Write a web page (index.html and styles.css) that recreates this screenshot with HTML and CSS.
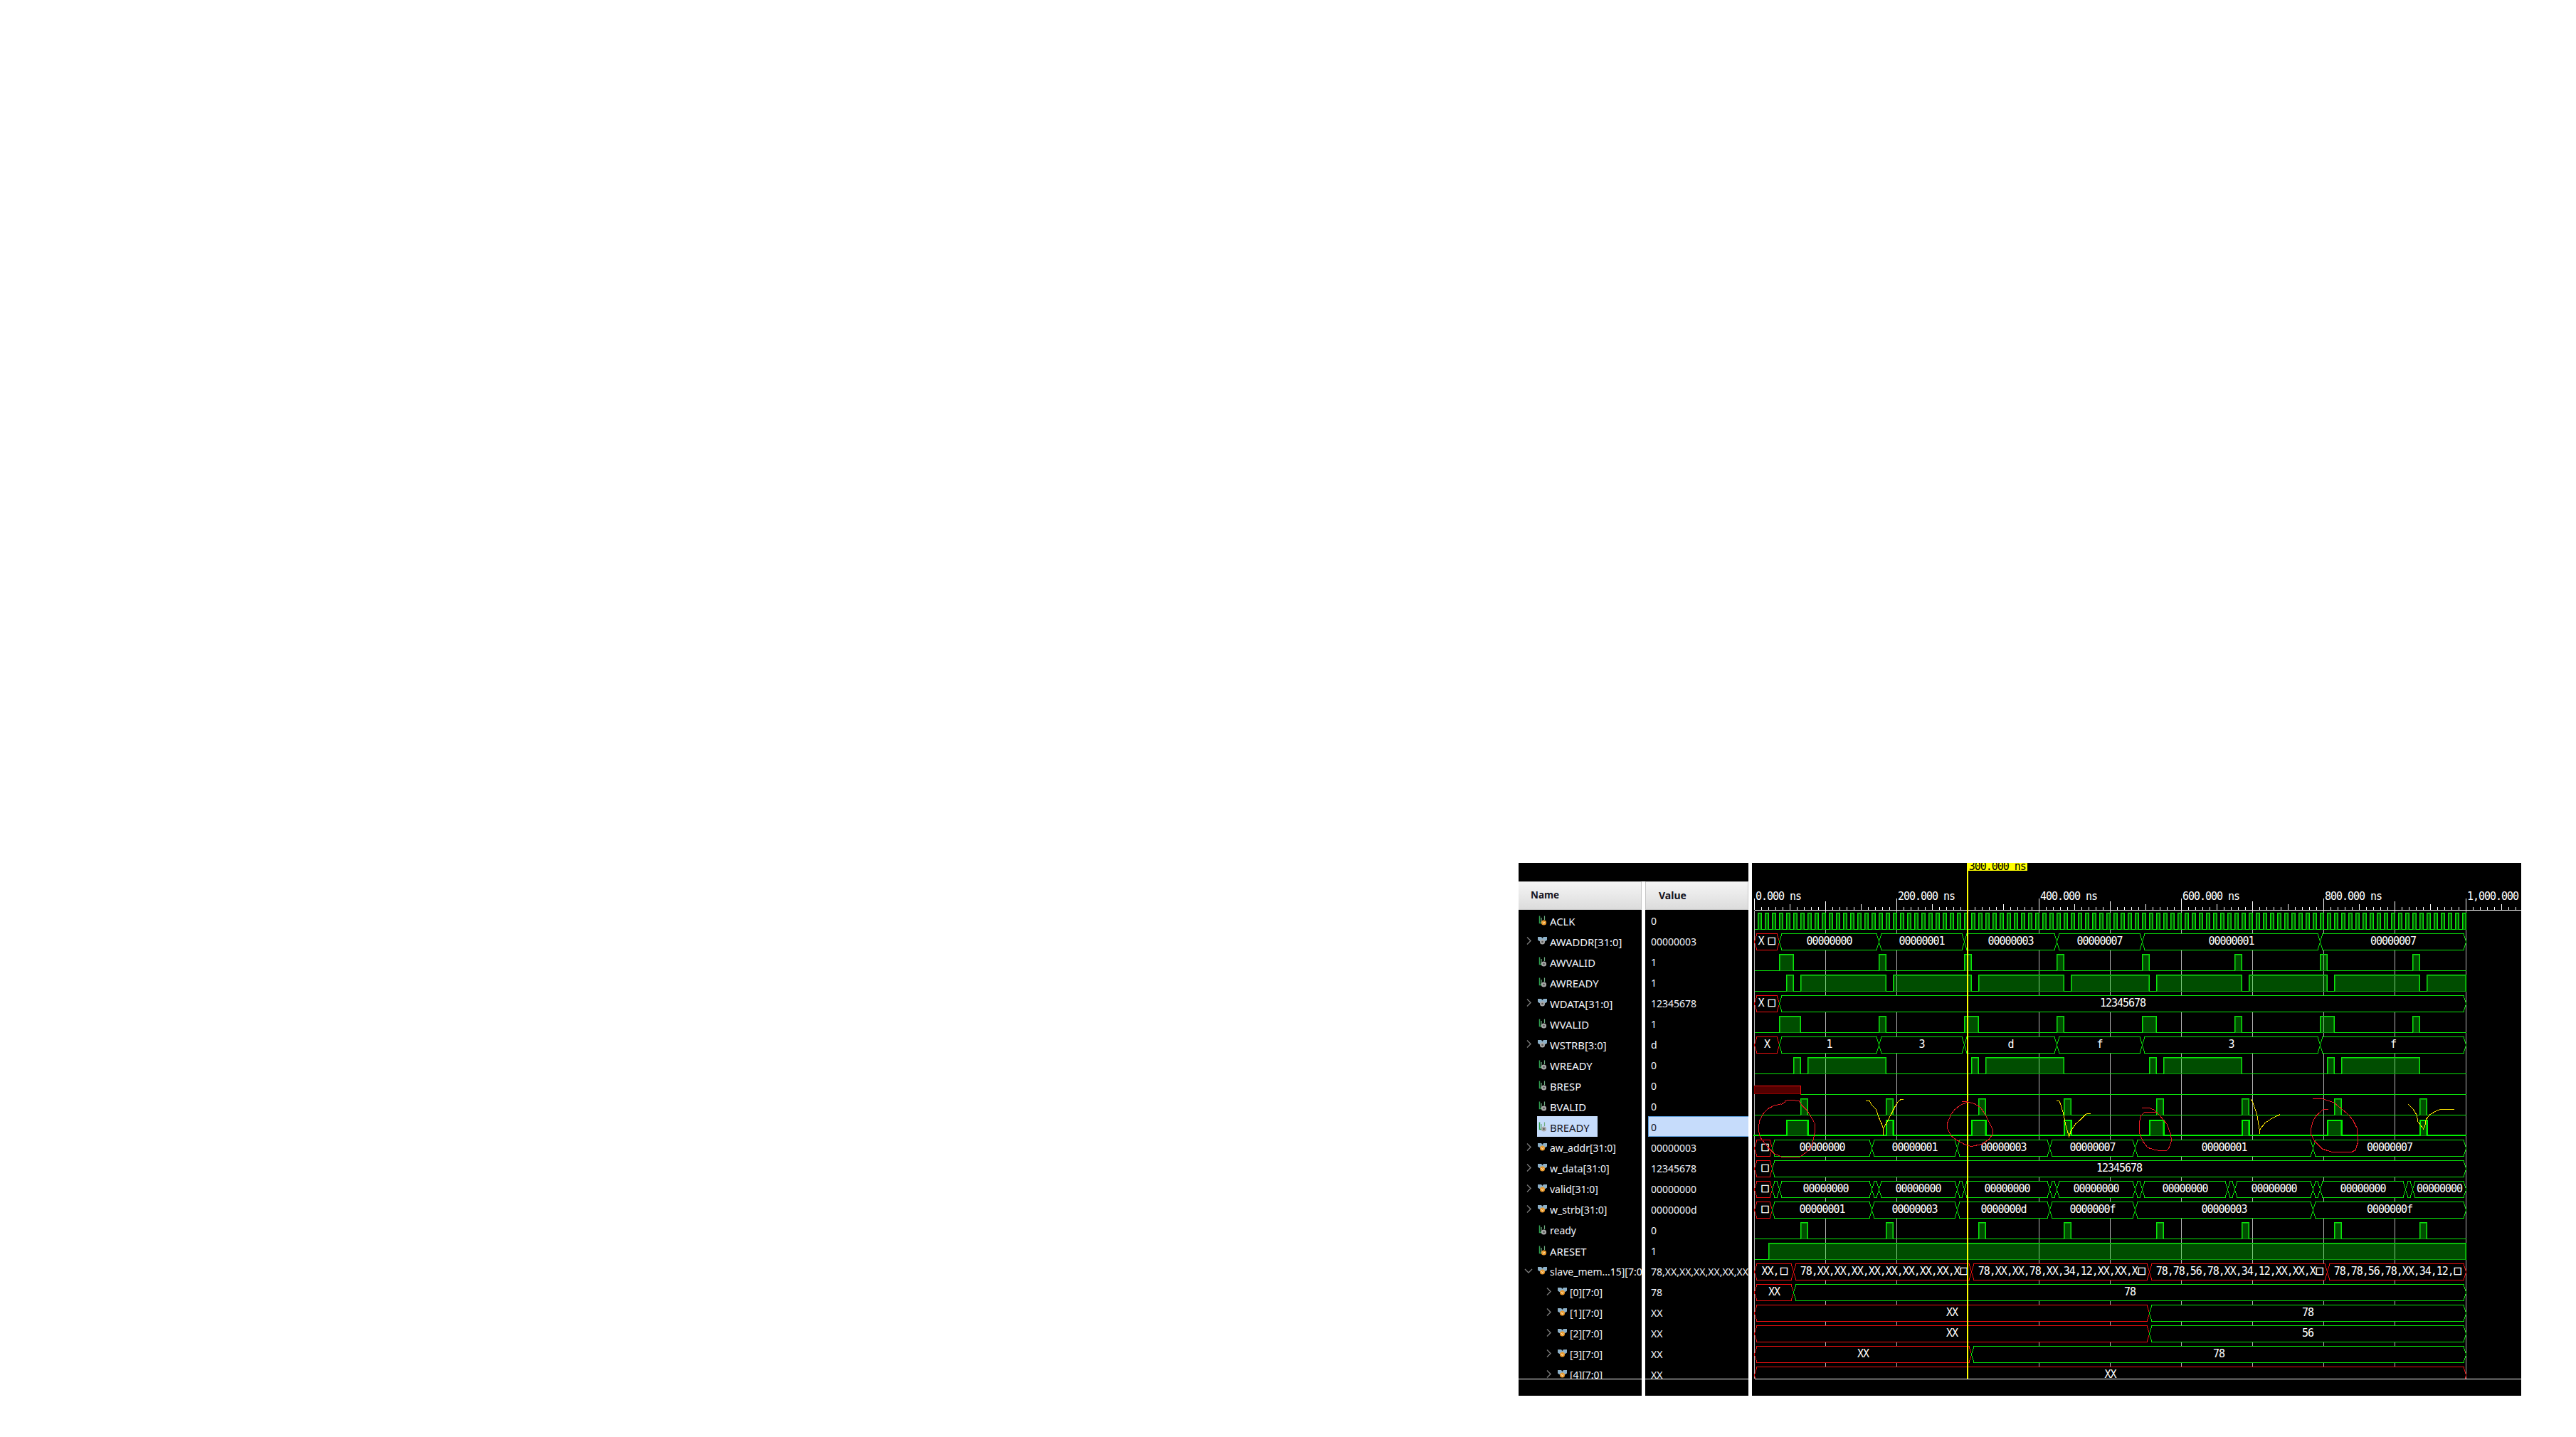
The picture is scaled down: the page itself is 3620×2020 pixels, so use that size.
FILE: index.html
```html
<!DOCTYPE html>
<html lang="en">
<head>
  <meta charset="UTF-8" />
  <title>Waveform Viewer</title>
  <link rel="stylesheet" href="styles.css">
</head>
<body>

  <!-- object tree icons, reused in the name column -->
  <svg class="defs" aria-hidden="true">
    <symbol id="chev-right" viewBox="0 0 9 13"><path class="chev" d="M2 1.5 7 6.5 2 11.5" /></symbol>
    <symbol id="chev-down" viewBox="0 0 12 13"><path class="chev" d="M1 4 6 9 11 4" /></symbol>
    <symbol id="bit-gray" viewBox="0 0 13 14">
      <path class="bit-l" d="M2.5 0.5V10.5H5" />
      <path class="bit-r" d="M5 10.5V3M9.5 0.5V6" />
      <circle class="medal-gray" cx="8.5" cy="10" r="3.6" />
      <circle class="medal-hole" cx="8.5" cy="10" r="1.3" />
    </symbol>
    <symbol id="bit-orange" viewBox="0 0 13 14">
      <path class="bit-l" d="M2.5 0.5V10.5H5" />
      <path class="bit-r" d="M5 10.5V3M9.5 0.5V6" />
      <circle class="medal-orange" cx="8.5" cy="10" r="3.6" />
      <path class="medal-v" d="M7.2 8.9 8.5 11.4 9.8 8.9" />
    </symbol>
    <symbol id="bus-gray" viewBox="0 0 13 14">
      <path class="wing" d="M0 1H5L6.5 3 8 1H13V5.5L9 8H4L0 5.5Z" />
      <circle class="medal-gray" cx="6.5" cy="8" r="3.5" />
      <circle class="medal-hole" cx="6.5" cy="8" r="1.3" />
    </symbol>
    <symbol id="bus-orange" viewBox="0 0 13 14">
      <path class="wing" d="M0 1H5L6.5 3 8 1H13V5.5L9 8H4L0 5.5Z" />
      <circle class="medal-orange" cx="6.5" cy="8" r="3.5" />
      <path class="medal-v" d="M5.2 6.9 6.5 9.4 7.8 6.9" />
    </symbol>
  </svg>

  <div class="viewer">

    <div class="col col-names">
      <div class="col-top"></div>
      <div class="col-head col-head-name">Name</div>
      <div class="rows">
        <div class="row"><span class="tw"></span><span class="cell caps"><svg class="ico"><use href="#bit-orange" /></svg>ACLK</span></div>
        <div class="row"><svg class="tw"><use href="#chev-right" /></svg><span class="cell caps"><svg class="ico"><use href="#bus-gray" /></svg>AWADDR[31:0]</span></div>
        <div class="row"><span class="tw"></span><span class="cell caps"><svg class="ico"><use href="#bit-gray" /></svg>AWVALID</span></div>
        <div class="row"><span class="tw"></span><span class="cell caps"><svg class="ico"><use href="#bit-gray" /></svg>AWREADY</span></div>
        <div class="row"><svg class="tw"><use href="#chev-right" /></svg><span class="cell caps"><svg class="ico"><use href="#bus-gray" /></svg>WDATA[31:0]</span></div>
        <div class="row"><span class="tw"></span><span class="cell caps"><svg class="ico"><use href="#bit-gray" /></svg>WVALID</span></div>
        <div class="row"><svg class="tw"><use href="#chev-right" /></svg><span class="cell caps"><svg class="ico"><use href="#bus-gray" /></svg>WSTRB[3:0]</span></div>
        <div class="row"><span class="tw"></span><span class="cell caps"><svg class="ico"><use href="#bit-gray" /></svg>WREADY</span></div>
        <div class="row"><span class="tw"></span><span class="cell caps"><svg class="ico"><use href="#bit-gray" /></svg>BRESP</span></div>
        <div class="row"><span class="tw"></span><span class="cell caps"><svg class="ico"><use href="#bit-gray" /></svg>BVALID</span></div>
        <div class="row"><span class="tw"></span><span class="cell caps selected"><svg class="ico"><use href="#bit-gray" /></svg>BREADY</span></div>
        <div class="row"><svg class="tw"><use href="#chev-right" /></svg><span class="cell"><svg class="ico"><use href="#bus-orange" /></svg>aw_addr[31:0]</span></div>
        <div class="row"><svg class="tw"><use href="#chev-right" /></svg><span class="cell"><svg class="ico"><use href="#bus-orange" /></svg>w_data[31:0]</span></div>
        <div class="row"><svg class="tw"><use href="#chev-right" /></svg><span class="cell"><svg class="ico"><use href="#bus-orange" /></svg>valid[31:0]</span></div>
        <div class="row"><svg class="tw"><use href="#chev-right" /></svg><span class="cell"><svg class="ico"><use href="#bus-orange" /></svg>w_strb[31:0]</span></div>
        <div class="row"><span class="tw"></span><span class="cell"><svg class="ico"><use href="#bit-gray" /></svg>ready</span></div>
        <div class="row"><span class="tw"></span><span class="cell caps"><svg class="ico"><use href="#bit-orange" /></svg>ARESET</span></div>
        <div class="row"><svg class="tw tw-open"><use href="#chev-down" /></svg><span class="cell"><svg class="ico"><use href="#bus-orange" /></svg>slave_mem...15][7:0]</span></div>
        <div class="row child"><svg class="tw"><use href="#chev-right" /></svg><span class="cell"><svg class="ico"><use href="#bus-orange" /></svg>[0][7:0]</span></div>
        <div class="row child"><svg class="tw"><use href="#chev-right" /></svg><span class="cell"><svg class="ico"><use href="#bus-orange" /></svg>[1][7:0]</span></div>
        <div class="row child"><svg class="tw"><use href="#chev-right" /></svg><span class="cell"><svg class="ico"><use href="#bus-orange" /></svg>[2][7:0]</span></div>
        <div class="row child"><svg class="tw"><use href="#chev-right" /></svg><span class="cell"><svg class="ico"><use href="#bus-orange" /></svg>[3][7:0]</span></div>
        <div class="row child"><svg class="tw"><use href="#chev-right" /></svg><span class="cell"><svg class="ico"><use href="#bus-orange" /></svg>[4][7:0]</span></div>
      </div>
      <div class="col-bot"></div>
    </div>

    <div class="col col-values">
      <div class="col-top"></div>
      <div class="col-head col-head-value">Value</div>
      <div class="rows">
        <div class="val">0</div>
        <div class="val">00000003</div>
        <div class="val">1</div>
        <div class="val">1</div>
        <div class="val">12345678</div>
        <div class="val">1</div>
        <div class="val">d</div>
        <div class="val">0</div>
        <div class="val">0</div>
        <div class="val">0</div>
        <div class="val val-selected">0</div>
        <div class="val">00000003</div>
        <div class="val">12345678</div>
        <div class="val">00000000</div>
        <div class="val">0000000d</div>
        <div class="val">0</div>
        <div class="val">1</div>
        <div class="val">78,XX,XX,XX,XX,XX,XX,XX,XX,XX,XX,XX,XX,XX,XX,XX</div>
        <div class="val">78</div>
        <div class="val">XX</div>
        <div class="val">XX</div>
        <div class="val">XX</div>
        <div class="val">XX</div>
      </div>
      <div class="col-bot"></div>
    </div>

    <div class="wave-panel">
      <svg id="wave" class="wave" viewBox="0 0 1081 749"></svg>
    </div>

  </div>

  <script src="wave.js"></script>
</body>
</html>
```

FILE: styles.css
```css
body {
  margin: 0;
  padding: 1213px 0 0 2134px;
  box-sizing: border-box;
  height: 100vh;
  overflow: hidden;
  background: #fff;
  font-family: "Noto Sans", "Open Sans", sans-serif;
  font-size: 14px;
}

.defs {
  display: none;
}

.viewer {
  display: flex;
  gap: 5px;
  width: 1409px;
  height: 749px;
}

.col {
  display: flex;
  flex-direction: column;
  flex: none;
  background: #000;
  color: #f2f6fd;
}

.col-names {
  width: 173px;
}

.col-values {
  width: 145px;
}

.col-top {
  height: 26px;
  flex: none;
  background: #000;
}

/* the black band above the headers runs over the column gap */
.col-names .col-top {
  margin-right: -5px;
}

.col-head {
  height: 40px;
  flex: none;
  box-sizing: border-box;
  display: flex;
  align-items: center;
  padding-bottom: 2px;
  border-top: 1px solid #cfcfcf;
  border-bottom: 1px solid #c6c6c6;
  border-right: 1px solid #c6c6c6;
  background: linear-gradient(#f5f5f5, #dcdcdc);
  color: #14141e;
  font-weight: 700;
}

.col-head-name {
  padding-left: 17px;
  font-size: 13.4px;
}

.col-head-value {
  padding-left: 18px;
  border-left: 1px solid #c6c6c6;
}

.rows {
  height: 659px;
  flex: none;
  overflow: hidden;
  border-bottom: 1px solid #fff;
}

.col-bot {
  height: 23px;
  flex: none;
}

.row {
  display: flex;
  align-items: center;
  height: 29px;
  padding-left: 10px;
  white-space: nowrap;
}

.row.child {
  padding-left: 38px;
}

.tw {
  flex: none;
  width: 9px;
  height: 13px;
  margin-right: 7px;
}

.tw-open {
  width: 12px;
  margin-left: -2px;
  margin-right: 6px;
}

.cell {
  display: flex;
  align-items: center;
  box-sizing: border-box;
  height: 100%;
  padding: 2px 11px 0 0;
}

/* the tool's UI font runs wider on capitals than the one we have */
.cell.caps {
  font-size: 14.8px;
}

.cell.selected {
  background: #c6dcfb;
  color: #14141e;
}

.ico {
  flex: none;
  width: 13px;
  height: 14px;
  margin: 0 4px 2px 1px;
}

.chev {
  fill: none;
  stroke: #7c7c7c;
  stroke-width: 1.4;
}

.bit-l {
  fill: none;
  stroke: #2ea04f;
  stroke-width: 1.5;
}

.bit-r {
  fill: none;
  stroke: #6fae82;
  stroke-width: 1.2;
}

.wing {
  fill: #8cb0c8;
}

.medal-gray {
  fill: #a8a8a8;
}

.medal-hole {
  fill: #555;
}

.medal-orange {
  fill: #ea9a2e;
}

.medal-v {
  fill: none;
  stroke: #fff3d6;
  stroke-width: 0.8;
}

.val {
  display: flex;
  align-items: center;
  box-sizing: border-box;
  height: 29px;
  padding: 2px 0 0 8px;
  white-space: nowrap;
}

.val-selected {
  margin-left: 4px;
  padding-left: 3px;
  background: #c6dcfb;
  border: 1px solid #5b9ad6;
  border-right: none;
  color: #14141e;
}

.wave-panel {
  flex: none;
  width: 1081px;
  height: 749px;
  background: #000;
}

.wave {
  display: block;
  width: 1081px;
  height: 749px;
  overflow: hidden;
  shape-rendering: crispEdges;
  font-family: "DejaVu Sans Mono", "Liberation Mono", monospace;
  font-size: 15px;
  letter-spacing: -1.03px;
}

.axis {
  stroke: #fff;
  stroke-width: 1;
  fill: none;
}

.grid {
  stroke: #b4b4b4;
  stroke-width: 1;
}

.time {
  fill: #fff;
}

.nf {
  font-family: "Noto Sans CJK SC", sans-serif;
  font-size: 12px;
  font-weight: 700;
  letter-spacing: 0;
  stroke: #fff;
  stroke-width: 0.6;
}

.bus {
  fill: #000;
  stroke-width: 1;
}

.bus.ok {
  stroke: #0ae60a;
}

.bus.bad {
  stroke: #f00f0f;
}

.label {
  fill: #fff;
  text-anchor: middle;
}

.label.left {
  text-anchor: start;
}

.fill-ok {
  fill: #00ff00;
  fill-opacity: 0.3;
  stroke: #0a9a0a;
  stroke-width: 1;
}

.trace {
  fill: none;
  stroke: #0ae60a;
  stroke-width: 1;
}

.trace.bold {
  stroke: #00f000;
  stroke-width: 2;
}

.fill-bad {
  fill: #ff0000;
  fill-opacity: 0.33;
  stroke: #8a0000;
  stroke-width: 1;
}

.trace-bad {
  fill: none;
  stroke: #f00f0f;
  stroke-width: 1;
}

.cursor {
  fill: #ffff00;
}

.cursor-text {
  fill: #000;
}

.ink {
  fill: none;
  stroke-width: 1;
  stroke-linejoin: round;
}

.ink-red {
  stroke: #ee1c25;
}

.ink-yellow {
  stroke: #ffe600;
}
```

FILE: wave.js
```js
// 1 ns = 1 px, row pitch 29 px
const X0 = 3.5;
const END = 1000;
const BEVEL = 3.5;
const BOTTOM = 725;
const BOX = '\u25a1';

const x = t => X0 + t;
const rowTop = k => 70.5 + 29 * k;
const rowBase = k => 93.5 + 29 * k;

// bit signals: row, [[rise, fall], ...]
const bits = [
  { row: 2, high: [[35, 55], [175, 185], [295, 305], [425, 435], [545, 555], [675, 685], [795, 805], [925, 935]] },
  { row: 3, high: [[45, 55], [65, 185], [195, 305], [315, 435], [445, 555], [565, 685], [695, 805], [815, 935], [945, 1000]] },
  { row: 5, high: [[35, 65], [175, 185], [295, 315], [425, 435], [545, 565], [675, 685], [795, 815], [925, 935]] },
  { row: 7, high: [[55, 65], [75, 185], [305, 315], [325, 435], [555, 565], [575, 685], [805, 815], [825, 935]] },
  { row: 9, high: [[65, 75], [185, 195], [315, 325], [435, 445], [565, 575], [685, 695], [815, 825], [935, 945]] },
  { row: 10, bold: true, high: [[45, 75], [185, 195], [305, 325], [435, 445], [555, 575], [685, 695], [805, 825], [935, 945]] },
  { row: 15, high: [[65, 75], [185, 195], [315, 325], [435, 445], [565, 575], [685, 695], [815, 825], [935, 945]] },
  { row: 16, high: [[20, 1000]] }
];

// clock: 100 MHz, high for the second half of each period
const clock = { row: 0, high: [] };
for (let t = 5; t < END; t += 10) clock.high.push([t, t + 5]);
bits.unshift(clock);

// bus signals: row, edges, labels, which segments are unknown (red)
// first: where the first label starts and the space before its box glyph
const A = '00000000';
const buses = [
  { row: 1, first: { at: 5, gap: 5.2 }, edges: [0, 35, 175, 295, 425, 545, 795, 1000], labels: ['X' + BOX, A, '00000001', '00000003', '00000007', '00000001', '00000007'], bad: [0] },
  { row: 4, first: { at: 5, gap: 5.2 }, edges: [0, 35, 1000], labels: ['X' + BOX, '12345678'], bad: [0] },
  { row: 6, edges: [0, 35, 175, 295, 425, 545, 795, 1000], labels: ['X', '1', '3', 'd', 'f', '3', 'f'], bad: [0] },
  { row: 11, first: { at: 9, gap: 0 }, edges: [0, 25, 165, 285, 415, 535, 785, 1000], labels: [BOX, A, '00000001', '00000003', '00000007', '00000001', '00000007'], bad: [0] },
  { row: 12, first: { at: 9, gap: 0 }, edges: [0, 25, 1000], labels: [BOX, '12345678'], bad: [0] },
  { row: 13, first: { at: 9, gap: 0 }, edges: [0, 25, 35, 165, 175, 285, 295, 415, 425, 535, 545, 665, 675, 785, 795, 915, 925, 1000], labels: [BOX, '', A, '', A, '', A, '', A, '', A, '', A, '', A, '', A], bad: [0] },
  { row: 14, first: { at: 9, gap: 0 }, edges: [0, 25, 165, 285, 415, 535, 785, 1000], labels: [BOX, '00000001', '00000003', '0000000d', '0000000f', '00000003', '0000000f'], bad: [0] },
  { row: 17, first: { at: 10, gap: 1.5 }, edges: [0, 55, 305, 555, 805, 1000], left: true, labels: ['XX,' + BOX, '78,XX,XX,XX,XX,XX,XX,XX,XX,X' + BOX, '78,XX,XX,78,XX,34,12,XX,XX,X' + BOX, '78,78,56,78,XX,34,12,XX,XX,X' + BOX, '78,78,56,78,XX,34,12,' + BOX], bad: [0, 1, 2, 3, 4] },
  { row: 18, edges: [0, 55, 1000], labels: ['XX', '78'], bad: [0] },
  { row: 19, edges: [0, 555, 1000], labels: ['XX', '78'], bad: [0] },
  { row: 20, edges: [0, 555, 1000], labels: ['XX', '56'], bad: [0] },
  { row: 21, edges: [0, 305, 1000], labels: ['XX', '78'], bad: [0] },
  { row: 22, edges: [0, 1000], labels: ['XX'], bad: [0] }
];

// pen marks, traced off the 3x crops: ox is the crop's left edge in panel px
const marks = [
  { cls: 'ink-red', ox: -12, pts: [158,188, 175,178, 175,172, 205,169, 235,173, 245,190, 270,215, 285,240, 300,265, 302,300, 290,360, 270,385, 240,408, 160,408, 130,395, 100,365, 70,325, 63,290, 68,255, 85,225, 105,205, 130,192, 160,185] },
  { cls: 'ink-yellow', ox: -12, pts: [517,172, 533,174, 540,188, 560,210, 572,245, 585,275, 590,290, 590,318, 590,290, 605,262, 625,225, 640,195, 652,175, 663,167, 674,166] },
  { cls: 'ink-red', ox: -12, pts: [922,176, 945,176, 975,185, 1000,200, 1020,232, 1035,260, 1050,290, 1050,315, 1035,335, 1005,355, 960,365, 930,355, 895,335, 875,320, 860,290, 860,265, 875,230, 890,210, 915,190, 945,178] },
  { cls: 'ink-yellow', ox: 388, pts: [121,172, 132,173, 140,195, 150,230, 160,280, 173,325, 180,300, 200,270, 225,248, 245,228, 263,226] },
  { cls: 'ink-red', ox: 388, pts: [480,202, 510,202, 530,210, 540,220, 560,240, 585,270, 600,310, 605,340, 595,370, 585,382, 550,382, 530,378, 505,370, 485,345, 470,310, 468,270, 475,235, 490,222, 545,220] },
  { cls: 'ink-yellow', ox: 388, pts: [940,165, 950,185, 965,230, 975,290, 976,312, 976,295, 1000,265, 1030,245, 1063,230] },
  { cls: 'ink-red', ox: 738, pts: [150,163, 190,163, 210,170, 240,180, 270,205, 300,230, 320,255, 338,290, 340,350, 330,380, 315,388, 230,388, 190,375, 160,345, 143,315, 143,290, 150,260, 165,235, 195,208, 215,208] },
  { cls: 'ink-yellow', ox: 738, pts: [553,187, 575,210, 590,235, 592,258, 605,275, 617,292, 625,270, 628,250, 645,230, 670,215, 690,208, 747,208] }
];

function withBox(text, gap) {
  return text.replace(BOX, `<tspan class="nf" dx="${gap}">${BOX}</tspan>`);
}

function drawAxis() {
  let s = `<path class="axis" d="M${X0} 66.5H1081" />`;
  for (let t = 0; t <= 1070; t += 10) {
    const h = t % 200 === 0 ? 16 : t % 100 === 0 ? 12 : t % 50 === 0 ? 8 : 4;
    s += `<path class="axis" d="M${x(t)} 66V${66 - h}" />`;
  }
  for (let t = 0; t <= END; t += 200) {
    const label = t === 1000 ? '1,000.000 ns' : `${t}.000 ns`;
    s += `<text class="time" x="${x(t) + 1.5}" y="52">${label}</text>`;
  }
  return s;
}

function drawGrid() {
  let s = '';
  for (let t = 0; t <= END; t += 100) {
    s += `<path class="grid" d="M${x(t)} 67V${BOTTOM}" />`;
  }
  return s;
}

function drawBit(sig) {
  const top = sig.bold ? rowTop(sig.row) + 1 : rowTop(sig.row);
  const base = sig.bold ? rowBase(sig.row) - 1 : rowBase(sig.row);
  let fills = '';
  let d = `M${sig.bold ? x(-2) : x(0)} ${base}`;
  for (const [rise, fall] of sig.high) {
    fills += `<rect class="fill-ok" x="${x(rise) + 1}" y="${top + 1}" width="${fall - rise - 2}" height="${rowBase(sig.row) - top - 1}" />`;
    d += `H${x(rise)}V${top}H${x(fall)}`;
    d += fall === END ? '' : `V${base}`;
  }
  if (sig.high[sig.high.length - 1][1] !== END) d += `H${x(END)}`;
  else d += `V${base}`;
  return `${fills}<path class="trace${sig.bold ? ' bold' : ''}" d="${d}" />`;
}

function drawBresp() {
  const top = 313.5;
  const base = rowBase(8);
  return `<rect class="fill-bad" x="${x(0)}" y="${top}" width="65" height="${base - top - 1}" />` +
    `<path class="trace-bad" d="M${x(0)} ${top}H${x(65)}V${base}" />` +
    `<path class="trace" d="M${x(65)} ${base}H${x(END)}" />`;
}

function drawBus(sig) {
  const top = rowTop(sig.row);
  const base = rowBase(sig.row);
  const mid = (top + base) / 2;
  let s = '';
  sig.labels.forEach((label, i) => {
    const a = sig.edges[i];
    const b = sig.edges[i + 1];
    const cls = sig.bad.includes(i) ? 'bad' : 'ok';
    s += `<path class="bus ${cls}" d="M${x(a)} ${mid}L${x(a) + BEVEL} ${top}H${x(b) - BEVEL}L${x(b)} ${mid}L${x(b) - BEVEL} ${base}H${x(a) + BEVEL}Z" />`;
    if (!label) return;
    if (i === 0 && sig.first) {
      s += `<text class="label left" x="${x(sig.first.at)}" y="${top + 15}">${withBox(label, sig.first.gap)}</text>`;
    } else if (sig.left) {
      s += `<text class="label left" x="${x(a) + 9.3}" y="${top + 15}">${withBox(label, 0)}</text>`;
    } else {
      s += `<text class="label" x="${x((a + b) / 2)}" y="${top + 15}">${label}</text>`;
    }
  });
  return s;
}

function drawCursor() {
  return `<rect class="cursor" x="302" y="0" width="2" height="${BOTTOM}" />` +
    `<rect class="cursor" x="303" y="0" width="84" height="11" />` +
    `<text class="cursor-text" x="304.7" y="10">300.000 ns</text>`;
}

function drawMarks() {
  return marks.map(m => {
    const pts = [];
    for (let i = 0; i < m.pts.length; i += 2) {
      pts.push(`${(m.ox + m.pts[i] / 3).toFixed(1)},${(277 + m.pts[i + 1] / 3).toFixed(1)}`);
    }
    return `<polyline class="ink ${m.cls}" points="${pts.join(' ')}" />`;
  }).join('');
}

document.getElementById('wave').innerHTML =
  `<clipPath id="list-clip"><rect x="0" y="0" width="1081" height="${BOTTOM}" /></clipPath>` +
  drawAxis() +
  `<g clip-path="url(#list-clip)">` +
  drawGrid() +
  bits.map(drawBit).join('') +
  drawBresp() +
  buses.map(drawBus).join('') +
  `</g>` +
  `<path class="axis" d="M${X0} ${BOTTOM + 0.5}H1081" />` +
  drawCursor() +
  drawMarks();
```
